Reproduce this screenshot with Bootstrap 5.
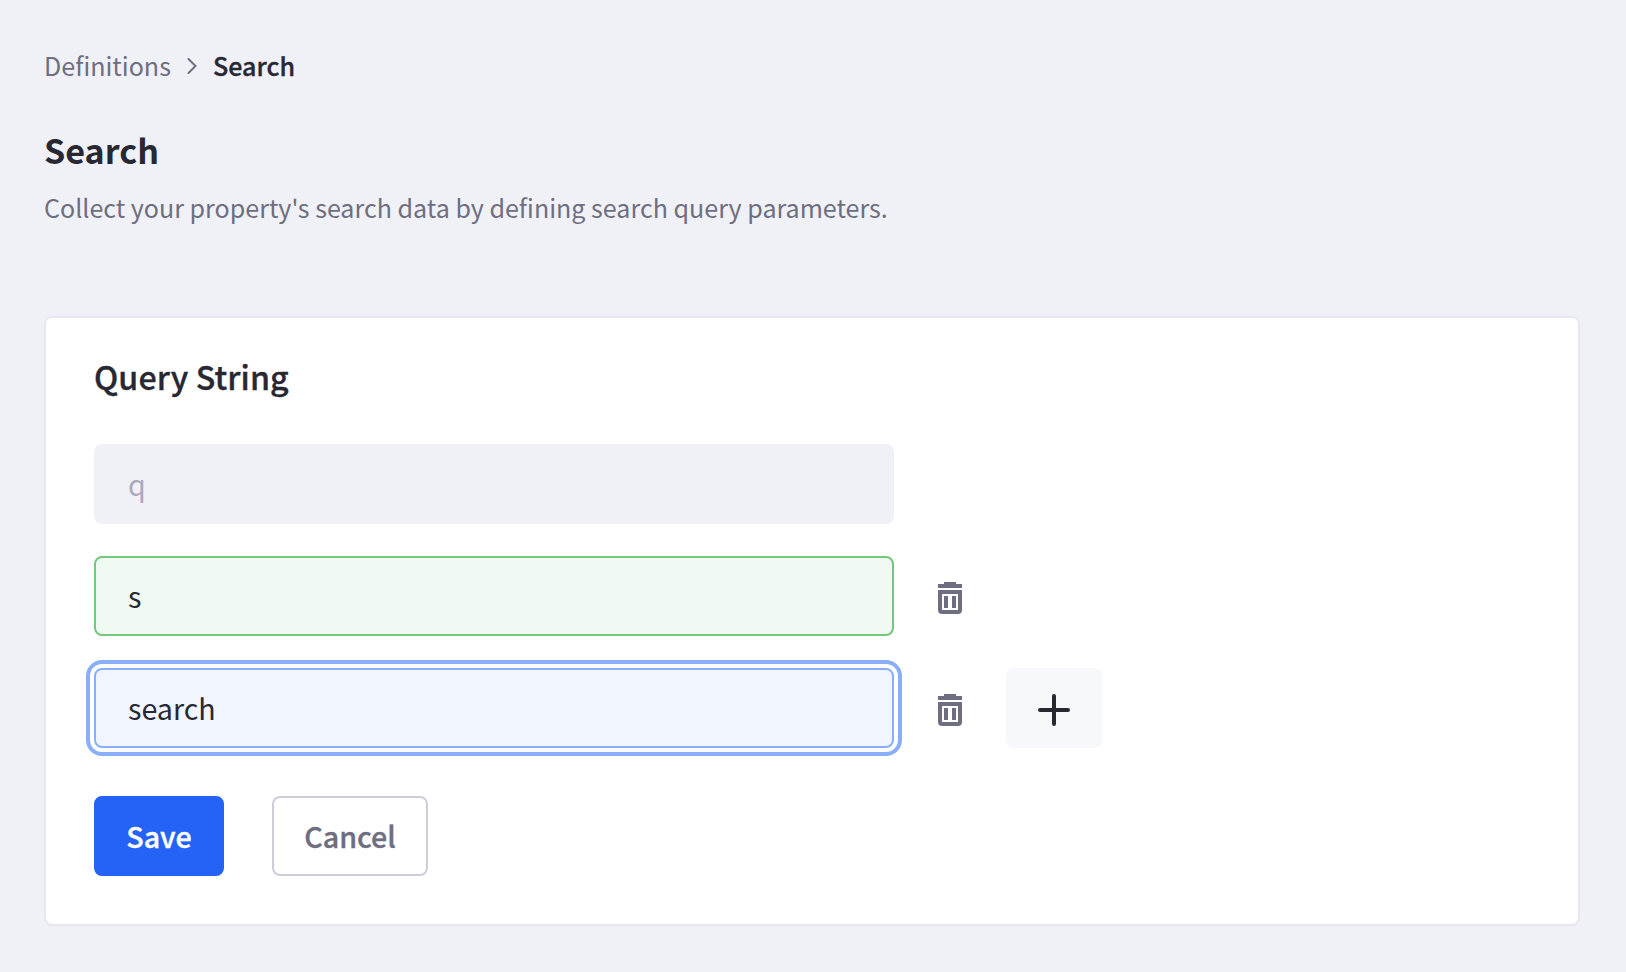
<!DOCTYPE html>
<html lang="en">
<head>
<meta charset="utf-8">
<title>Search</title>
<link rel="stylesheet" href="https://cdn.jsdelivr.net/npm/bootstrap@5.3.0/dist/css/bootstrap.min.css">
<style>
body { background: #f0f1f6; color: #282833; font-family: "Noto Sans CJK SC", "Noto Sans", sans-serif; font-size: 25.07px; line-height: 40px; }
.page { padding: 45px 46px 46px 44px; }
.muted { color: #6e6e80; }
.semi { font-weight: 500; -webkit-text-stroke: .35px currentColor; }
.crumbs { height: 40px; }
.crumbs a { text-decoration: none; width: 142px; }
.crumbs svg { margin: 2px 15px 0 0; }
.page-title { font-size: 34.1px; line-height: 48px; font-weight: 700; margin: 40px 0 14px; }
.panel { margin-top: 89px; padding: 34px 48px 48px; border: 2px solid #e7e7ed; border-radius: 8px; }
.panel-title { font-size: 32.2px; line-height: 48px; letter-spacing: .1px; margin-bottom: 44px; }
.field { width: 800px; height: 80px; padding: 0 32px 2px; border: 2px solid; border-radius: 8px; font-size: 28.65px; line-height: 74px; color: #282833; box-shadow: none; }
.field:disabled { background: #f0f1f6; border-color: #f0f1f6; color: #a9a9bc; }
.field-valid { background: #eff8f1; border-color: #75c77d; }
.field-active, .field-active:focus { background: #f0f5ff; border-color: #8aaffa; color: #282833; box-shadow: 0 0 0 4px #fff, 0 0 0 8px #8aaffa; }
.stack { gap: 32px; }
.trash { margin: 4px 0 0 44px; }
.add { width: 96px; height: 80px; margin-left: 44px; border-radius: 8px; background: #f7f8fa; }
.add svg { margin-top: 4px; }
.actions { gap: 48px; margin-top: 48px; }
.act { height: 80px; border: 2px solid; border-radius: 8px; padding: 0; font-size: 28.65px; line-height: 76px; }
.act-save, .act-save:hover { width: 130px; background: #2463f6; border-color: #2463f6; color: #fff; }
.act-cancel { width: 156px; background: #fff; border-color: #cecedb; color: #6e6e80; }
</style>
</head>
<body>
<svg class="d-none">
  <symbol id="trash" viewBox="0 0 24 32">
    <path fill="#6e6e80" fill-rule="evenodd" d="M6 0h12v2h6v4H0V2h6zM0 8h24v20a4 4 0 0 1-4 4H4a4 4 0 0 1-4-4zM4 12v16h16V12zM6 14h4v12H6zM14 14h4v12h-4z"/>
  </symbol>
</svg>
<main class="page">
  <nav class="crumbs d-flex align-items-center" aria-label="breadcrumb">
    <a class="muted" href="#">Definitions</a>
    <svg width="12" height="18" viewBox="0 0 12 18" fill="none" stroke="#6e6e80" stroke-width="2" stroke-linecap="round"><path d="M2.5 2L9.5 9L2.5 16"/></svg>
    <span class="semi">Search</span>
  </nav>
  <h1 class="page-title">Search</h1>
  <p class="muted mb-0">Collect your property's search data by defining search query parameters.</p>

  <section class="panel bg-white">
    <h2 class="panel-title semi">Query String</h2>
    <div class="stack d-flex flex-column">
      <input class="form-control field" value="q" disabled>
      <div class="d-flex align-items-center">
        <input class="form-control field field-valid" value="s">
        <svg class="trash" width="24" height="32"><use href="#trash"/></svg>
      </div>
      <div class="d-flex align-items-center">
        <input class="form-control field field-active" value="search">
        <svg class="trash" width="24" height="32"><use href="#trash"/></svg>
        <button class="add btn border-0 p-0 d-flex align-items-center justify-content-center" aria-label="Add">
          <svg width="32" height="32" viewBox="0 0 32 32" stroke="#282833" stroke-width="4" stroke-linecap="round"><path d="M16 2V30M2 16H30"/></svg>
        </button>
      </div>
    </div>
    <div class="actions d-flex">
      <button class="act act-save btn semi">Save</button>
      <button class="act act-cancel btn semi">Cancel</button>
    </div>
  </section>
</main>
<script src="https://cdn.jsdelivr.net/npm/bootstrap@5.3.0/dist/js/bootstrap.bundle.min.js"></script>
</body>
</html>
